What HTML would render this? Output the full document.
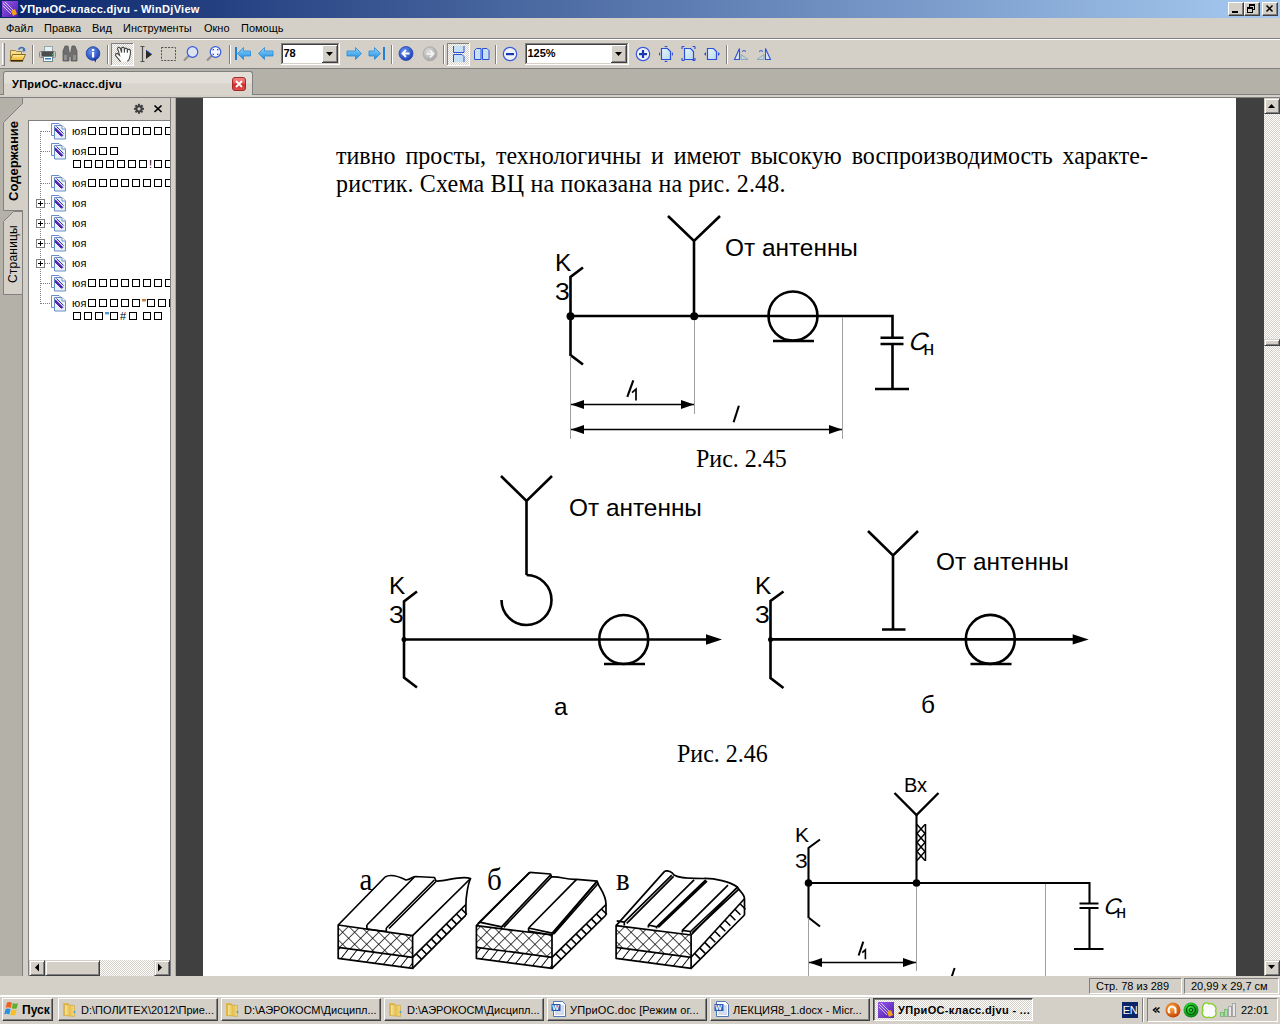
<!DOCTYPE html>
<html><head><meta charset="utf-8">
<style>
*{margin:0;padding:0;box-sizing:border-box}
html,body{width:1280px;height:1024px;overflow:hidden;background:#d4d0c8;font-family:"Liberation Sans",sans-serif;font-size:11px;color:#000}
.a{position:absolute}
#title{left:0;top:0;width:1280px;height:18px;background:linear-gradient(to right,#0a246a,#a6caf0)}
#title .t{left:20px;top:2px;color:#fff;font-weight:bold;font-size:11px;line-height:14px;white-space:nowrap;letter-spacing:0.31px}
.tbtn{top:2px;width:16px;height:14px;background:#d4d0c8;border-top:1px solid #fff;border-left:1px solid #fff;border-right:1px solid #404040;border-bottom:1px solid #404040;box-shadow:inset -1px -1px 0 #808080}
#menu{left:0;top:18px;width:1280px;height:20px;background:#d4d0c8}
#menu span{position:absolute;top:3px;line-height:14px;white-space:nowrap}
#ln1{left:0;top:38px;width:1280px;height:1px;background:#808080}
#ln2{left:0;top:39px;width:1280px;height:1px;background:#fff}
#tool{left:0;top:40px;width:1280px;height:28px;background:#d4d0c8}
#ln3{left:0;top:68px;width:1280px;height:1px;background:#808080}
#strip{left:0;top:69px;width:1280px;height:26px;background:#b4b1a9;border-bottom:1px solid #808080}
#tab{left:3px;top:71px;width:250px;height:24px;background:linear-gradient(#e2dfd8 0,#e2dfd8 45%,#d9d5cd 55%,#d9d5cd 100%);border:1px solid #808080;border-bottom:none;border-radius:3px 3px 0 0}
#ln4{left:0;top:97px;width:1280px;height:1px;background:#808080}
.sep{width:2px;border-left:1px solid #808080;border-right:1px solid #fff;top:45px;height:20px}
#main{left:0;top:98px;width:1280px;height:878px;background:#d4d0c8}
#dark1{left:176px;top:98px;width:27px;height:878px;background:#404040}
#page{left:203px;top:98px;width:1033px;height:878px;background:#fff;overflow:hidden}
#dark2{left:1236px;top:98px;width:28px;height:878px;background:#404040}
#vscroll{left:1264px;top:98px;width:16px;height:878px;background-color:#eeede9;background-image:repeating-conic-gradient(#d4d0c8 0 25%,#fff 0 50%);background-size:2px 2px}
.sbtn{width:16px;height:16px;background:#d4d0c8;border-top:1px solid #d4d0c8;border-left:1px solid #d4d0c8;border-right:1px solid #404040;border-bottom:1px solid #404040;box-shadow:inset 1px 1px 0 #fff,inset -1px -1px 0 #808080}
#status{left:0;top:976px;width:1280px;height:19px;background:#d4d0c8}
.spane{top:978px;height:16px;border-top:1px solid #808080;border-left:1px solid #808080;border-right:1px solid #fff;border-bottom:1px solid #fff;line-height:14px;text-align:left;padding-left:6px;white-space:nowrap}
#taskbar{left:0;top:995px;width:1280px;height:29px;background:#d4d0c8;border-top:1px solid #d4d0c8;box-shadow:inset 0 1px 0 #fff}
.task{top:998px;height:23px;background:#d4d0c8;border-top:1px solid #fff;border-left:1px solid #fff;border-right:1px solid #404040;border-bottom:1px solid #404040;box-shadow:inset -1px -1px 0 #808080;white-space:nowrap;overflow:hidden;line-height:20px}
.task span{position:absolute;left:22px;top:1px}
.box{display:inline-block;width:8px;height:8px;border:1px solid #000;margin-right:3px;vertical-align:0px}
</style></head><body>
<div id="title" class="a"><div class="a t">УПриОС-класс.djvu - WinDjView</div>
<div class="a tbtn" style="left:1228px"></div>
<div class="a tbtn" style="left:1244px"></div>
<div class="a tbtn" style="left:1262px"></div>
</div>
<div id="menu" class="a">
<span style="left:6px">Файл</span><span style="left:44px">Правка</span><span style="left:92px">Вид</span><span style="left:123px">Инструменты</span><span style="left:204px">Окно</span><span style="left:241px">Помощь</span>
</div>
<div id="ln1" class="a"></div><div id="ln2" class="a"></div>
<div id="tool" class="a"></div>
<div id="ln3" class="a"></div>
<div id="strip" class="a"></div>
<div id="tab" class="a"></div>
<div id="main" class="a"></div>
<div id="ln4" class="a"></div>
<div id="dark1" class="a"></div>
<div id="page" class="a"></div>
<div id="dark2" class="a"></div>
<div id="vscroll" class="a"></div>
<div id="status" class="a"></div>
<div id="taskbar" class="a"></div>
<svg class="a" style="left:0;top:40px" width="800" height="28" viewBox="0 40 800 28" shape-rendering="crispEdges">
<defs>
<pattern id="chk" width="2" height="2" patternUnits="userSpaceOnUse"><rect width="2" height="2" fill="#d4d0c8"/><rect width="1" height="1" fill="#fff"/><rect x="1" y="1" width="1" height="1" fill="#fff"/></pattern>
<linearGradient id="fold" x1="0" y1="0" x2="0" y2="1"><stop offset="0" stop-color="#fff0a0"/><stop offset="1" stop-color="#e8a818"/></linearGradient>
<linearGradient id="blu" x1="0" y1="0" x2="0" y2="1"><stop offset="0" stop-color="#90d8ff"/><stop offset="1" stop-color="#1e88d8"/></linearGradient>
<radialGradient id="bc" cx="0.4" cy="0.35" r="0.7"><stop offset="0" stop-color="#6a98f0"/><stop offset="1" stop-color="#1c3cb0"/></radialGradient>
<radialGradient id="gc" cx="0.4" cy="0.35" r="0.7"><stop offset="0" stop-color="#e0e0e0"/><stop offset="1" stop-color="#a0a0a0"/></radialGradient>
<linearGradient id="pg" x1="0" y1="0" x2="1" y2="1"><stop offset="0" stop-color="#e8f4fc"/><stop offset="1" stop-color="#b8d8ec"/></linearGradient>
</defs>
<!-- grip -->
<rect x="2" y="43" width="1" height="22" fill="#fff"/><rect x="4" y="43" width="1" height="23" fill="#808080"/><rect x="2" y="65" width="3" height="1" fill="#808080"/>
<!-- separators -->
<g fill="#808080"><rect x="32" y="45" width="1" height="19"/><rect x="107" y="45" width="1" height="19"/><rect x="229" y="45" width="1" height="19"/><rect x="391" y="45" width="1" height="19"/><rect x="443" y="45" width="1" height="19"/><rect x="495" y="45" width="1" height="19"/><rect x="726" y="45" width="1" height="19"/></g>
<g fill="#fff"><rect x="33" y="45" width="1" height="19"/><rect x="108" y="45" width="1" height="19"/><rect x="230" y="45" width="1" height="19"/><rect x="392" y="45" width="1" height="19"/><rect x="444" y="45" width="1" height="19"/><rect x="496" y="45" width="1" height="19"/><rect x="727" y="45" width="1" height="19"/></g>
<g shape-rendering="auto">
<!-- folder -->
<path d="M10.5 50.5h5l1 1h5v9h-11z" fill="#f4dc88" stroke="#9c8448"/>
<path d="M12.5 54.5h13l-3 6.5h-12.5z" fill="url(#fold)" stroke="#8a6a20"/>
<rect x="11" y="60" width="12" height="1.5" fill="#3a2a08"/>
<path d="M18.5 49.5q3-4 6.5 0" fill="none" stroke="#3c6cb8" stroke-width="1.6"/><path d="M23 48.5l3 2.5l-3.5 0.8z" fill="#3c6cb8"/>
<!-- printer -->
<rect x="44.5" y="46.5" width="8" height="6" fill="#e4f0f4" stroke="#98a8a8"/>
<rect x="39.5" y="51.5" width="16" height="6" rx="1" fill="#c8c8c8" stroke="#888"/>
<rect x="41.5" y="51.5" width="12" height="5" fill="#4c4c4c"/>
<rect x="43.5" y="56.5" width="9" height="5" fill="#fff" stroke="#6a8a8a"/>
<rect x="45" y="58" width="6" height="1.5" fill="#2a7ad0"/>
<rect x="52" y="54" width="1" height="1" fill="#30e030"/>
<!-- binoculars -->
<path d="M63 51l2-5h3l1 5v10h-6z M71 51l1-5h3l2 5v10h-6z" fill="#6e6e6e" stroke="#5a5a5a" stroke-width="0.8"/>
<rect x="68" y="52" width="4" height="5" fill="#707070"/>
<rect x="64" y="55" width="3" height="5" fill="#909090"/><rect x="73" y="55" width="3" height="5" fill="#909090"/>
<!-- info -->
<circle cx="93" cy="53.5" r="6.8" fill="url(#bc)" stroke="#1a3aa0" stroke-width="0.8"/>
<path d="M93 59l3 3.5l0-4z" fill="#1a3aa0"/>
<rect x="92" y="49" width="2.2" height="2" fill="#fff"/><rect x="92" y="52" width="2.2" height="5.5" fill="#fff"/>
</g>
<!-- hand pressed button -->
<rect x="111" y="43" width="23" height="23" fill="url(#chk)"/>
<rect x="111" y="43" width="22" height="1" fill="#808080"/><rect x="111" y="43" width="1" height="22" fill="#808080"/>
<rect x="111" y="65" width="23" height="1" fill="#fff"/><rect x="133" y="43" width="1" height="23" fill="#fff"/>
<g shape-rendering="auto">
<path d="M120.6 61.6L115.6 55.6L115.6 54L117.2 53.4L119.6 55.4L118.4 51L117.4 48.4L118.6 47.2L120.4 48.4L121.6 52.6L121.6 47.8L123 47.2L124.2 47.8L124.4 52.6L124.6 48.6L126 48.2L127.2 48.8L127.4 52.6L127.6 49.6L129 49.2L130.4 50.2L130.4 54L129.6 57.6L129 59.6L127.4 61.4Z" fill="#fff"/>
<path d="M120.6 61.6L115.6 55.6L115.6 54L117.2 53.4L119.6 55.4L118.4 51L117.4 48.4L118.6 47.2L120.4 48.4L121.6 52.6L121.6 47.8L123 47.2L124.2 47.8L124.4 52.6L124.6 48.6L126 48.2L127.2 48.8L127.4 52.6L127.6 49.6L129 49.2L130.4 50.2L130.4 54L129.6 57.6L129 59.6L127.4 61.4" fill="none" stroke="#484848" stroke-width="1.1"/>
<!-- text select -->
<path d="M140.5 46.5h4M140.5 61.5h4M142.5 46.5v15" stroke="#505050" stroke-width="1.2" fill="none"/>
<path d="M146 50l6 4.5l-6 4.5z" fill="#282828"/><path d="M146 50l6 4.5" stroke="#3050e0" stroke-width="0.9"/>
<!-- rect select -->
<rect x="161.5" y="47.5" width="14" height="13" fill="none" stroke="#505050" stroke-dasharray="2 1.3"/>
<!-- zoom -->
<line x1="184" y1="60.5" x2="189" y2="55.5" stroke="#909090" stroke-width="2.2"/>
<circle cx="192.5" cy="52" r="5.3" fill="#dce4f0" stroke="#3a5adc" stroke-width="1.2"/>
<!-- zoom rect -->
<line x1="207" y1="60.5" x2="212" y2="55.5" stroke="#909090" stroke-width="2.2"/>
<circle cx="215.5" cy="52" r="5.3" fill="#f4f6fc" stroke="#3a5adc" stroke-width="1.2"/>
<path d="M213 50.5v-1h1M218 50.5v-1h-1M213 53.5v1h1M218 53.5v1h-1" stroke="#2a40d0" stroke-width="1" fill="none"/>
<!-- first -->
<path d="M236 47v13" stroke="#2080d8" stroke-width="2"/>
<path d="M237.5 53.5l6-6v3.5h7v5h-7v3.5z" fill="url(#blu)" stroke="#2a8ad8" stroke-width="0.8"/>
<!-- prev -->
<path d="M258.5 53.5l6-6v3.5h8.5v5h-8.5v3.5z" fill="url(#blu)" stroke="#2a8ad8" stroke-width="0.8"/>
</g>
<!-- page combo -->
<rect x="281" y="43" width="59" height="22" fill="#fff"/>
<rect x="281" y="43" width="58" height="1" fill="#808080"/><rect x="281" y="43" width="1" height="21" fill="#808080"/>
<rect x="282" y="44" width="56" height="1" fill="#404040"/><rect x="282" y="44" width="1" height="19" fill="#404040"/>
<rect x="281" y="64" width="59" height="1" fill="#fff"/><rect x="339" y="43" width="1" height="22" fill="#fff"/>
<rect x="282" y="63" width="57" height="1" fill="#d4d0c8"/><rect x="338" y="44" width="1" height="20" fill="#d4d0c8"/>
<rect x="322" y="45" width="16" height="18" fill="#d4d0c8"/>
<rect x="322" y="45" width="15" height="1" fill="#fff"/><rect x="322" y="45" width="1" height="17" fill="#fff"/>
<rect x="322" y="62" width="16" height="1" fill="#404040"/><rect x="337" y="45" width="1" height="18" fill="#404040"/>
<rect x="323" y="61" width="14" height="1" fill="#808080"/><rect x="336" y="46" width="1" height="16" fill="#808080"/>
<path d="M326 52h7l-3.5 4z" fill="#000" shape-rendering="auto"/>
<text x="283.5" y="57" font-family="Liberation Sans" font-weight="bold" font-size="11" shape-rendering="auto">78</text>
<g shape-rendering="auto">
<!-- next -->
<path d="M361.5 53.5l-6-6v3.5h-8.5v5h8.5v3.5z" fill="url(#blu)" stroke="#2a8ad8" stroke-width="0.8"/>
<!-- last -->
<path d="M380.5 53.5l-6-6v3.5h-5.5v5h5.5v3.5z" fill="url(#blu)" stroke="#2a8ad8" stroke-width="0.8"/>
<path d="M384 47v13" stroke="#2080d8" stroke-width="2"/>
<!-- back -->
<circle cx="406" cy="53.5" r="7" fill="url(#bc)" stroke="#2844b8" stroke-width="0.8"/>
<path d="M409.5 53.5h-6M406 50l-3.5 3.5l3.5 3.5" stroke="#fff" stroke-width="1.8" fill="none"/>
<!-- fwd -->
<circle cx="430" cy="53.8" r="7" fill="url(#gc)" stroke="#a8a8a8" stroke-width="0.8"/>
<path d="M426.5 53.8h6M430 50.3l3.5 3.5l-3.5 3.5" stroke="#f4f4f4" stroke-width="1.8" fill="none"/>
</g>
<!-- continuous pressed -->
<rect x="447" y="43" width="23" height="23" fill="url(#chk)"/>
<rect x="447" y="43" width="22" height="1" fill="#808080"/><rect x="447" y="43" width="1" height="22" fill="#808080"/>
<rect x="447" y="65" width="23" height="1" fill="#fff"/><rect x="469" y="43" width="1" height="23" fill="#fff"/>
<g shape-rendering="auto">
<path d="M453.5 46v6.5h10.5v-6.5" fill="#c8e0f4" stroke="#2a50d8" stroke-width="1"/>
<path d="M453.5 62v-7.5h8.5l2 2v5.5" fill="#c8e0f4" stroke="#2a50d8" stroke-width="1"/>
<!-- facing -->
<path d="M474.5 59.5v-9l2-2h4.5v11z" fill="#c8e0f4" stroke="#2a50d8" stroke-width="1"/>
<path d="M482.5 59.5v-11h4.5l2 2v9z" fill="#c8e0f4" stroke="#2a50d8" stroke-width="1"/>
<!-- zoom out -->
<circle cx="510" cy="54" r="6.7" fill="#f0f2fa" stroke="#3a5adc" stroke-width="1.2"/>
<rect x="506" y="53" width="8" height="2.2" fill="#1838b0"/>
</g>
<!-- zoom combo -->
<rect x="525" y="43" width="104" height="22" fill="#fff"/>
<rect x="525" y="43" width="103" height="1" fill="#808080"/><rect x="525" y="43" width="1" height="21" fill="#808080"/>
<rect x="526" y="44" width="101" height="1" fill="#404040"/><rect x="526" y="44" width="1" height="19" fill="#404040"/>
<rect x="525" y="64" width="104" height="1" fill="#fff"/><rect x="628" y="43" width="1" height="22" fill="#fff"/>
<rect x="526" y="63" width="102" height="1" fill="#d4d0c8"/><rect x="627" y="44" width="1" height="20" fill="#d4d0c8"/>
<rect x="611" y="45" width="16" height="18" fill="#d4d0c8"/>
<rect x="611" y="45" width="15" height="1" fill="#fff"/><rect x="611" y="45" width="1" height="17" fill="#fff"/>
<rect x="611" y="62" width="16" height="1" fill="#404040"/><rect x="626" y="45" width="1" height="18" fill="#404040"/>
<rect x="612" y="61" width="14" height="1" fill="#808080"/><rect x="625" y="46" width="1" height="16" fill="#808080"/>
<path d="M615 52h7l-3.5 4z" fill="#000" shape-rendering="auto"/>
<text x="527.5" y="57" font-family="Liberation Sans" font-weight="bold" font-size="11" shape-rendering="auto">125%</text>
<g shape-rendering="auto">
<!-- zoom in -->
<circle cx="643" cy="54" r="6.7" fill="#f0f2fa" stroke="#3a5adc" stroke-width="1.2"/>
<rect x="639" y="53" width="8" height="2.2" fill="#1838b0"/><rect x="641.9" y="50" width="2.2" height="8" fill="#1838b0"/>
<!-- fit page -->
<path d="M661.5 59.5v-11h6l3 3v8z" fill="url(#pg)" stroke="#2a50d8" stroke-width="1.2"/>
<path d="M664 46h4l-2 1.5z M664 62h4l-2-1.5z M659 52v4l1.5-2z M673 52v4l-1.5-2z" fill="#2a50d8"/>
<!-- fit width -->
<path d="M684.5 59.5v-11h6l3 3v8z" fill="url(#pg)" stroke="#2a50d8" stroke-width="1.2"/>
<path d="M682 46.5h2.5M682 46.5v2.5M695 46.5h-2.5M695 46.5v2.5M682 60.5h2.5M682 60.5v-2.5M695 60.5h-2.5M695 60.5v-2.5" stroke="#2a50d8" stroke-width="1.2"/>
<!-- actual -->
<path d="M707.5 59.5v-11h6l3 3v8z" fill="url(#pg)" stroke="#2a50d8" stroke-width="1.2"/>
<path d="M706 52v4l-2-2z M718 52v4l2-2z" fill="#2a50d8"/>
<!-- rotate -->
<path d="M734.5 59.5l5-11v11z" fill="#dce8f4" stroke="#3050d8" stroke-width="1.1"/>
<path d="M741 59.5v-5l7 5z" fill="#c0d4e4" stroke="#90a8b8" stroke-width="1"/>
<path d="M742 51.5q2-2 4 0" stroke="#3050d8" fill="none"/>
<path d="M770.5 59.5l-5-11v11z" fill="#dce8f4" stroke="#3050d8" stroke-width="1.1"/>
<path d="M764 59.5v-5l-7 5z" fill="#c0d4e4" stroke="#90a8b8" stroke-width="1"/>
<path d="M759 51.5q2-2 4 0" stroke="#3050d8" fill="none"/>
</g>
</svg>
<div class="a" style="left:12px;top:78px;font-weight:bold;line-height:13px;white-space:nowrap;letter-spacing:0.3px">УПриОС-класс.djvu</div>
<svg class="a" style="left:232px;top:77px" width="14" height="14" viewBox="0 0 14 14">
<defs><linearGradient id="rg" x1="0" y1="0" x2="0" y2="1"><stop offset="0" stop-color="#f08a8a"/><stop offset="0.45" stop-color="#e25a5a"/><stop offset="0.5" stop-color="#cc2a2a"/><stop offset="1" stop-color="#e05050"/></linearGradient></defs>
<rect x="0.5" y="0.5" width="13" height="13" rx="2.5" fill="url(#rg)" stroke="#a82828"/>
<path d="M4 4l6 6M10 4l-6 6" stroke="#fff" stroke-width="1.8"/>
</svg>
<!-- left vertical tab strip -->
<div class="a" style="left:0;top:98px;width:22px;height:878px;background:#b4b1a9"></div>
<div class="a" style="left:22px;top:98px;width:1px;height:878px;background:#808080"></div>
<svg class="a" style="left:0;top:98px" width="24" height="200" viewBox="0 98 24 200">
<path d="M3.5 122.5L22.5 103.5V210.5H3.5Z" fill="#d4d0c8" stroke="#808080"/>
<rect x="22" y="104" width="2" height="106" fill="#d4d0c8"/>
<path d="M3.5 221.5L13.5 211.5H22.5V294.5H3.5Z" fill="#d4d0c8" stroke="#808080"/>
</svg>
<div class="a" style="left:6px;top:201px;width:90px;height:15px;transform-origin:0 0;transform:rotate(-90deg);font-weight:bold;font-size:13px;line-height:15px;white-space:nowrap">Содержание</div>
<div class="a" style="left:6px;top:283px;width:80px;height:14px;transform-origin:0 0;transform:rotate(-90deg);font-size:12px;line-height:14px;white-space:nowrap;letter-spacing:0.2px">Страницы</div>
<!-- panel right border & splitter -->
<div class="a" style="left:170px;top:98px;width:1px;height:878px;background:#808080"></div>
<div class="a" style="left:175px;top:98px;width:1px;height:878px;background:#a8a8a8"></div>
<!-- header icons -->
<svg class="a" style="left:132px;top:102px" width="34" height="14" viewBox="132 102 34 14">
<g fill="#404040" shape-rendering="auto">
<circle cx="139" cy="108.8" r="3.6"/>
<rect x="138" y="103.8" width="2" height="10" /><rect x="134" y="107.8" width="10" height="2"/>
<rect x="138" y="103.8" width="2" height="10" transform="rotate(45 139 108.8)"/><rect x="134" y="107.8" width="10" height="2" transform="rotate(45 139 108.8)"/>
</g>
<circle cx="139" cy="108.8" r="1.6" fill="#d0d0d0"/>
<path d="M154.5 105.5l7 6.5M161.5 105.5l-7 6.5" stroke="#000" stroke-width="1.7"/>
</svg>
<!-- tree box -->
<div class="a" style="left:28px;top:120px;width:142px;height:856px;background:#fff;border-top:1px solid #808080;border-left:1px solid #808080"></div>
<svg class="a" style="left:29px;top:121px" width="141" height="220" viewBox="29 121 141 220">
<defs>
<g id="pic">
<path d="M0.5 0.5h7.5l1.5 1.5v10.5h-9z" fill="#f4f8fc" stroke="#6a8ec4"/>
<path d="M3.5 2.5h7.5l3.5 3.5v10h-11z" fill="#e8f0fa" stroke="#6a8ec4"/>
<path d="M4 4.5l8 8M4 7l6.5 6.5M5.5 3.5l7 7" stroke="#3030c8" stroke-width="1"/>
<path d="M4 5.5l7.5 7.5" stroke="#500090" stroke-width="1.3"/>
<path d="M11 2.5v3.5h3.5" fill="#fff" stroke="#6a8ec4"/>
</g>
<g id="plus"><rect x="0.5" y="0.5" width="8" height="8" fill="#fff" stroke="#808080"/><rect x="2" y="4" width="5" height="1" fill="#000"/><rect x="4" y="2" width="1" height="5" fill="#000"/></g>
</defs>
<g stroke="#808080" stroke-dasharray="1 1" stroke-width="1">
<path d="M40.5 131v173"/>
<path d="M41 131.5h10M41 151.5h10M41 183.5h10M45 203.5h6M45 223.5h6M45 243.5h6M45 263.5h6M41 283.5h10M41 303.5h10"/>
</g>
<rect x="40" y="304" width="1" height="40" fill="#fff"/>
<use href="#pic" x="51" y="123"/><use href="#pic" x="51" y="143"/><use href="#pic" x="51" y="175"/><use href="#pic" x="51" y="195"/><use href="#pic" x="51" y="215"/><use href="#pic" x="51" y="235"/><use href="#pic" x="51" y="255"/><use href="#pic" x="51" y="275"/><use href="#pic" x="51" y="295"/>
<use href="#plus" x="36" y="199"/><use href="#plus" x="36" y="219"/><use href="#plus" x="36" y="239"/><use href="#plus" x="36" y="259"/>
</svg>
<div class="a" style="left:29px;top:121px;width:141px;height:220px;overflow:hidden">
<div class="a" style="left:43px;top:4px;line-height:13px;letter-spacing:0.3px">юя</div>
<div class="a" style="left:59px;top:6px;width:8px;height:8px;border:1px solid #000"></div>
<div class="a" style="left:70px;top:6px;width:8px;height:8px;border:1px solid #000"></div>
<div class="a" style="left:81px;top:6px;width:8px;height:8px;border:1px solid #000"></div>
<div class="a" style="left:92px;top:6px;width:8px;height:8px;border:1px solid #000"></div>
<div class="a" style="left:103px;top:6px;width:8px;height:8px;border:1px solid #000"></div>
<div class="a" style="left:114px;top:6px;width:8px;height:8px;border:1px solid #000"></div>
<div class="a" style="left:125px;top:6px;width:8px;height:8px;border:1px solid #000"></div>
<div class="a" style="left:136px;top:6px;width:8px;height:8px;border:1px solid #000"></div>
<div class="a" style="left:43px;top:24px;line-height:13px;letter-spacing:0.3px">юя</div>
<div class="a" style="left:59px;top:26px;width:8px;height:8px;border:1px solid #000"></div>
<div class="a" style="left:70px;top:26px;width:8px;height:8px;border:1px solid #000"></div>
<div class="a" style="left:81px;top:26px;width:8px;height:8px;border:1px solid #000"></div>
<div class="a" style="left:44px;top:39px;width:8px;height:8px;border:1px solid #000"></div>
<div class="a" style="left:55px;top:39px;width:8px;height:8px;border:1px solid #000"></div>
<div class="a" style="left:66px;top:39px;width:8px;height:8px;border:1px solid #000"></div>
<div class="a" style="left:77px;top:39px;width:8px;height:8px;border:1px solid #000"></div>
<div class="a" style="left:88px;top:39px;width:8px;height:8px;border:1px solid #000"></div>
<div class="a" style="left:99px;top:39px;width:8px;height:8px;border:1px solid #000"></div>
<div class="a" style="left:110px;top:39px;width:8px;height:8px;border:1px solid #000"></div>
<div class="a" style="left:120px;top:37px;line-height:13px">!</div>
<div class="a" style="left:125px;top:39px;width:8px;height:8px;border:1px solid #000"></div>
<div class="a" style="left:136px;top:39px;width:8px;height:8px;border:1px solid #000"></div>
<div class="a" style="left:43px;top:56px;line-height:13px;letter-spacing:0.3px">юя</div>
<div class="a" style="left:59px;top:58px;width:8px;height:8px;border:1px solid #000"></div>
<div class="a" style="left:70px;top:58px;width:8px;height:8px;border:1px solid #000"></div>
<div class="a" style="left:81px;top:58px;width:8px;height:8px;border:1px solid #000"></div>
<div class="a" style="left:92px;top:58px;width:8px;height:8px;border:1px solid #000"></div>
<div class="a" style="left:103px;top:58px;width:8px;height:8px;border:1px solid #000"></div>
<div class="a" style="left:114px;top:58px;width:8px;height:8px;border:1px solid #000"></div>
<div class="a" style="left:125px;top:58px;width:8px;height:8px;border:1px solid #000"></div>
<div class="a" style="left:136px;top:58px;width:8px;height:8px;border:1px solid #000"></div>
<div class="a" style="left:43px;top:76px;line-height:13px;letter-spacing:0.3px">юя</div>
<div class="a" style="left:43px;top:96px;line-height:13px;letter-spacing:0.3px">юя</div>
<div class="a" style="left:43px;top:116px;line-height:13px;letter-spacing:0.3px">юя</div>
<div class="a" style="left:43px;top:136px;line-height:13px;letter-spacing:0.3px">юя</div>
<div class="a" style="left:43px;top:156px;line-height:13px;letter-spacing:0.3px">юя</div>
<div class="a" style="left:59px;top:158px;width:8px;height:8px;border:1px solid #000"></div>
<div class="a" style="left:70px;top:158px;width:8px;height:8px;border:1px solid #000"></div>
<div class="a" style="left:81px;top:158px;width:8px;height:8px;border:1px solid #000"></div>
<div class="a" style="left:92px;top:158px;width:8px;height:8px;border:1px solid #000"></div>
<div class="a" style="left:103px;top:158px;width:8px;height:8px;border:1px solid #000"></div>
<div class="a" style="left:114px;top:158px;width:8px;height:8px;border:1px solid #000"></div>
<div class="a" style="left:125px;top:158px;width:8px;height:8px;border:1px solid #000"></div>
<div class="a" style="left:136px;top:158px;width:8px;height:8px;border:1px solid #000"></div>
<div class="a" style="left:43px;top:176px;line-height:13px;letter-spacing:0.3px">юя</div>
<div class="a" style="left:59px;top:178px;width:8px;height:8px;border:1px solid #000"></div>
<div class="a" style="left:70px;top:178px;width:8px;height:8px;border:1px solid #000"></div>
<div class="a" style="left:81px;top:178px;width:8px;height:8px;border:1px solid #000"></div>
<div class="a" style="left:92px;top:178px;width:8px;height:8px;border:1px solid #000"></div>
<div class="a" style="left:103px;top:178px;width:8px;height:8px;border:1px solid #000"></div>
<div class="a" style="left:113px;top:176px;line-height:13px">"</div>
<div class="a" style="left:118px;top:178px;width:8px;height:8px;border:1px solid #000"></div>
<div class="a" style="left:129px;top:178px;width:8px;height:8px;border:1px solid #000"></div>
<div class="a" style="left:140px;top:178px;width:8px;height:8px;border:1px solid #000"></div>
<div class="a" style="left:44px;top:191px;width:8px;height:8px;border:1px solid #000"></div>
<div class="a" style="left:55px;top:191px;width:8px;height:8px;border:1px solid #000"></div>
<div class="a" style="left:66px;top:191px;width:8px;height:8px;border:1px solid #000"></div>
<div class="a" style="left:76px;top:189px;line-height:13px">"</div>
<div class="a" style="left:81px;top:191px;width:8px;height:8px;border:1px solid #000"></div>
<div class="a" style="left:91px;top:189px;line-height:13px">#</div>
<div class="a" style="left:100px;top:191px;width:8px;height:8px;border:1px solid #000"></div>
<div class="a" style="left:114px;top:191px;width:8px;height:8px;border:1px solid #000"></div>
<div class="a" style="left:125px;top:191px;width:8px;height:8px;border:1px solid #000"></div>
</div>
<!-- h scrollbar -->
<div class="a" style="left:29px;top:960px;width:141px;height:16px;background-color:#eeede9;background-image:repeating-conic-gradient(#d4d0c8 0 25%,#fff 0 50%);background-size:2px 2px"></div>
<div class="a sbtn" style="left:29px;top:960px"></div>
<div class="a sbtn" style="left:45px;top:960px;width:55px"></div>
<div class="a sbtn" style="left:154px;top:960px"></div>
<svg class="a" style="left:29px;top:960px" width="141" height="16" viewBox="29 960 141 16"><path d="M35 967.5l4-4v8z M162 967.5l-4-4v8z" fill="#000"/></svg>
<svg class="a" style="left:203px;top:98px" width="1033" height="878" viewBox="203 98 1033 878">
<defs>
<marker id="ah" viewBox="0 0 13 9" refX="13" refY="4.5" markerWidth="13" markerHeight="9" markerUnits="userSpaceOnUse" orient="auto-start-reverse"><path d="M0 0L13 4.5L0 9z" fill="#000"/></marker>
<marker id="ah2" viewBox="0 0 16 10" refX="16" refY="5" markerWidth="16" markerHeight="10" markerUnits="userSpaceOnUse" orient="auto"><path d="M0 0L16 5L0 10z" fill="#000"/></marker>
<pattern id="xh" width="8.5" height="8.5" patternUnits="userSpaceOnUse" patternTransform="rotate(45)"><path d="M0 0V8.5M0 0H8.5" stroke="#000" stroke-width="1.4" fill="none"/></pattern>
<pattern id="sh" width="7.4" height="8" patternUnits="userSpaceOnUse" patternTransform="rotate(38)"><path d="M0 0V8" stroke="#000" stroke-width="1.8"/></pattern>
</defs>
<g stroke="#000" stroke-width="2.6" fill="none" stroke-linecap="butt" stroke-linejoin="miter">
<path d="M668 216L694 241L720 216M694 241V316"/>
<path d="M570.5 316H892.5V337.8M880.5 337.8H903.5M880.5 344H903.5M892.5 344V389M875 389H909"/>
<path d="M583 267.5L570.5 277V355L583 364.5"/>
<circle cx="793" cy="316" r="24.5"/>
<path d="M773 341H814"/>
</g>
<circle cx="570.5" cy="316.2" r="4"/><circle cx="694.2" cy="316.2" r="4"/>
<path d="M570.5 356V439M694.5 320V414M842.5 317.5V439" stroke="#a0a0a0" stroke-width="1" fill="none"/>
<path d="M571 404.5H694" stroke="#000" stroke-width="1.6" marker-start="url(#ah)" marker-end="url(#ah)"/>
<path d="M571 429.5H842" stroke="#000" stroke-width="1.6" marker-start="url(#ah)" marker-end="url(#ah)"/>
<text x="555" y="271" font-family="Liberation Sans" font-size="24.4">K</text>
<text x="555" y="300" font-family="Liberation Sans" font-size="24.4">З</text>
<text x="725" y="256" font-family="Liberation Sans" font-size="24.4">От антенны</text>
<path d="M627.3 396.8L633.3 380.3" stroke="#000" stroke-width="2.1"/><path d="M636 400.6V389.2L632 392.6" stroke="#000" stroke-width="1.7" fill="none" stroke-linejoin="miter"/>
<path d="M733.6 422.2L738.9 405.8" stroke="#000" stroke-width="2.1"/>
<text transform="translate(908.5 350.4) skewX(-10)" font-family="Liberation Sans" font-size="25" font-style="italic">C</text><text x="923.3" y="354.8" font-family="Liberation Sans" font-size="20">н</text>
<text transform="translate(696 467) scale(1 1.09)" font-family="Liberation Serif" font-size="24">Рис. 2.45</text>
<g stroke="#000" stroke-width="2.6" fill="none" stroke-linecap="butt" stroke-linejoin="miter">
<path d="M501 476L526.5 501L552 476M526.5 501V575"/>
<path d="M526.5 575A25 25 0 1 1 501.5 600"/>
<path d="M417 591.5L404 601.5V677.5L417 687.5"/>
<circle cx="623.7" cy="639.5" r="24.5"/>
<path d="M604 664H645"/>
</g>
<path d="M404 639.5H708" stroke="#000" stroke-width="2.6"/><path d="M706 634.3L722 639.5L706 644.7Z"/>
<circle cx="404" cy="639.5" r="2.5"/>
<text x="389" y="594" font-family="Liberation Sans" font-size="24.4">K</text><text x="389" y="623" font-family="Liberation Sans" font-size="24.4">З</text>
<text x="569" y="516" font-family="Liberation Sans" font-size="24.4">От антенны</text>
<text x="554" y="715" font-family="Liberation Sans" font-size="24.4">а</text>
<text transform="translate(677 762) scale(1 1.09)" font-family="Liberation Serif" font-size="24">Рис. 2.46</text>
<g stroke="#000" stroke-width="2.6" fill="none" stroke-linecap="butt" stroke-linejoin="miter">
<path d="M868 531L893 555.5L918 531M893 555.5V629.5M882 629.5H905.5"/>
<path d="M783.5 591.5L770.5 601V678L783.5 688"/>
<circle cx="990.3" cy="639.4" r="24.5"/>
<path d="M970.5 664H1011.5"/>
</g>
<path d="M770.5 639.4H1075" stroke="#000" stroke-width="2.6"/><path d="M1072.7 634.2L1088.7 639.4L1072.7 644.6Z"/>
<circle cx="770.5" cy="639.4" r="2.5"/>
<text x="755" y="594" font-family="Liberation Sans" font-size="24.4">K</text><text x="755" y="623" font-family="Liberation Sans" font-size="24.4">З</text>
<text x="936" y="570" font-family="Liberation Sans" font-size="24.4">От антенны</text>
<text x="921" y="713" font-family="Liberation Sans" font-size="24.4">б</text>
<g stroke="#000" stroke-width="2.1" fill="none">
<path d="M894.5 793L916.5 815L938.5 793" stroke-width="2.4"/><path d="M916.5 815V883"/>
<path d="M808.5 883H1089.5V903.5M1079.5 903.5H1098.5M1079.5 908H1098.5M1089.5 908V949M1074 949H1103.5"/>
<path d="M820 839.5L808.5 848V917.5L820 926.5"/>
</g>
<g stroke="#000" stroke-width="1.5" fill="none"><path d="M917 824.5 L925 833.5 L917 842.5 L925 851.5 L917 860.5"/><path d="M925 824.5 L917 833.5 L925 842.5 L917 851.5 L925 860.5"/><path d="M925.5 824V861"/></g>
<circle cx="808.5" cy="883" r="3.8"/><circle cx="916.5" cy="883" r="3.8"/>
<path d="M808.5 918V976M916.5 887V971M1045.5 884V976" stroke="#a0a0a0" stroke-width="1" fill="none"/>
<path d="M809 962.5H916" stroke="#000" stroke-width="1.6" marker-start="url(#ah)" marker-end="url(#ah)"/>
<text x="904" y="792" font-family="Liberation Sans" font-size="20">Вх</text>
<text x="795" y="842" font-family="Liberation Sans" font-size="21">K</text><text x="795" y="868" font-family="Liberation Sans" font-size="21">З</text>
<path d="M858.6 955.5L863.3 941.6" stroke="#000" stroke-width="2"/><path d="M865.4 959.3V949.8L862.2 952.6" stroke="#000" stroke-width="1.6" fill="none"/>
<path d="M950 982L954.6 968" stroke="#000" stroke-width="2"/>
<text transform="translate(1103.5 913.6) skewX(-10)" font-family="Liberation Sans" font-size="22.5" font-style="italic">C</text><text x="1116.3" y="917.7" font-family="Liberation Sans" font-size="18">н</text>
<path d="M338.2 925 L412.6 935.6 L412.6 957.3 L338.2 947.3 Z" fill="url(#xh)"/>
<path d="M338.2 947.3 L412.6 957.3 L412.6 968.4 L338.2 958.4 Z" fill="url(#sh)"/>
<path d="M416.1 953.8l5.5 5.5M421.2 948.8l5.5 5.5M426.2 943.8l5.5 5.5M431.2 938.9l5.5 5.5M436.2 933.9l5.5 5.5M441.3 928.9l5.5 5.5M446.3 923.9l5.5 5.5M451.3 918.9l5.5 5.5M456.4 914.0l5.5 5.5M461.4 909.0l5.5 5.5" stroke="#000" stroke-width="1.6"/>
<g stroke="#000" stroke-width="1.7" fill="none" stroke-linejoin="round">
<path d="M338.2 925 L412.6 935.6 L412.6 968.4 L338.2 958.4 Z"/>
<path d="M338.2 947.3 L412.6 957.3"/>
<path d="M338.2 925 L385.1 877 M412.6 935.6 L470.6 878.5 M412.6 968.4 L465.9 915.1"/>
<path d="M412.6 957.3 L465.9 904.5"/>
<path d="M385.1 877C390 874 398 876 406 880C410 880 412 877 415 876.5L434.5 877.5L436 881C445 882 460 875 470.6 878.5C468 884 466 896 465.9 904.5V915.1"/>
<path d="M366.9 925V929L386.3 931.5V928M366.9 925L414.4 877M386.3 928L434.3 880M389 928.5L436 881.5"/>
</g>
<path d="M476.4 925.6 L552 935 L552 957.3 L476.4 947.3 Z" fill="url(#xh)"/>
<path d="M476.4 947.3 L552 957.3 L552 968.4 L476.4 958.4 Z" fill="url(#sh)"/>
<path d="M555.6 953.8l5.5 5.5M560.7 948.8l5.5 5.5M565.8 943.8l5.5 5.5M570.9 938.8l5.5 5.5M576.0 933.9l5.5 5.5M581.1 928.9l5.5 5.5M586.2 923.9l5.5 5.5M591.3 918.9l5.5 5.5M596.3 913.9l5.5 5.5M601.4 909.0l5.5 5.5" stroke="#000" stroke-width="1.6"/>
<g stroke="#000" stroke-width="1.7" fill="none" stroke-linejoin="round">
<path d="M476.4 925.6 L552 935 L552 968.4 L476.4 958.4 Z"/>
<path d="M476.4 947.3 L552 957.3"/>
<path d="M476.4 925.6 L529.8 872.3 M552 935 L597.2 881.1 M552 968.4 L606 915"/>
<path d="M552 957.3 L606 904.5"/>
<path d="M529.8 872.3L550.5 874L551.5 877C560 876 566 880 576.6 879.3L597.2 881.1C598 887 606 893 606 904.5V915"/>
<path d="M479.4 922.1L529.8 872.3M478 923.5L528.5 873.5M479.4 922.1L501.6 926.8V928.6M501.6 926.8L550.9 874.6M503.8 927.3L552.4 876"/>
<path d="M528.6 928V931L552 935M528.6 928L576.6 879.3M528.6 928L552 933.2L597.2 881.1M553.8 934L598.6 883"/>
</g>
<path d="M616.1 925.6 L691.1 935 L691.1 957.3 L616.1 947.3 Z" fill="url(#xh)"/>
<path d="M616.1 947.3 L691.1 957.3 L691.1 968.4 L616.1 958.4 Z" fill="url(#sh)"/>
<path d="M694.6 953.4l5.5 5.5M699.7 947.9l5.5 5.5M704.7 942.4l5.5 5.5M709.8 936.8l5.5 5.5M714.8 931.3l5.5 5.5M719.8 925.8l5.5 5.5M724.9 920.2l5.5 5.5M729.9 914.7l5.5 5.5M734.9 909.2l5.5 5.5M740.0 903.7l5.5 5.5" stroke="#000" stroke-width="1.6"/>
<g stroke="#000" stroke-width="1.7" fill="none" stroke-linejoin="round">
<path d="M616.1 925.6 L691.1 935 L691.1 968.4 L616.1 958.4 Z"/>
<path d="M616.1 947.3 L691.1 957.3"/>
<path d="M616.1 925.6 L664.8 871.1 M691.1 935 L737.4 887 M691.1 968.4 L744.5 915"/>
<path d="M691.1 957.3 L744.5 898.7"/>
<path d="M664.8 871.1C668 870 672 872 674 875C680 879 690 878 703 878.5C715 878 730 882 737.4 887C740 892 744.5 894 744.5 898.7V915"/>
<path d="M616.7 920.9L624.3 922.1V925.6M624.3 922.1L671.8 875.2M626.7 923.3L673.6 876.4"/>
<path d="M648.4 925V927.5M648.4 925L656.6 926.8V928.5M648.4 925L694.1 879.9M656.6 926.8L705.8 879.9M658.3 927.4L707 881.1"/>
<path d="M682.3 930.3V932.5M682.3 930.3L690.5 931.5V934M682.3 930.3L728 885.2M690.5 931.5L737.4 887.5M692.3 932.7L738.6 889.3"/>
</g>
<text transform="translate(359.5 890) scale(1 1.09)" font-family="Liberation Serif" font-size="29">а</text>
<text transform="translate(487 890) scale(1 1.09)" font-family="Liberation Serif" font-size="29">б</text>
<text transform="translate(616 890) scale(1 1.09)" font-family="Liberation Serif" font-size="29">в</text>
</svg>
<div class="a" style="left:336px;top:142px;width:812px;height:28px;font-family:'Liberation Serif',serif;font-size:24px;line-height:28px;text-align:justify;text-align-last:justify;transform-origin:0 22px;transform:scaleY(1.09)">тивно просты, технологичны и имеют высокую воспроизводимость характе-</div>
<div class="a" style="left:336px;top:169.6px;white-space:nowrap;font-family:'Liberation Serif',serif;font-size:24px;line-height:28px;letter-spacing:0.17px;transform-origin:0 22px;transform:scaleY(1.09)">ристик. Схема ВЦ на показана на рис. 2.48.</div>
<div class="a spane" style="left:1089px;width:93px">Стр. 78 из 289</div>
<div class="a spane" style="left:1184px;width:95px">20,99 x 29,7 см</div>
<!-- vscroll buttons & thumb -->
<div class="a sbtn" style="left:1264px;top:98px"></div>
<div class="a sbtn" style="left:1264px;top:960px"></div>
<div class="a sbtn" style="left:1264px;top:339px;height:7px"></div>
<svg class="a" style="left:1264px;top:98px" width="16" height="878" viewBox="1264 98 16 878"><path d="M1268 108h7l-3.5-4z M1268 965h7l-3.5 4z" fill="#000"/></svg>
<!-- title icon & buttons glyphs -->
<svg class="a" style="left:2px;top:1px" width="16" height="16" viewBox="0 0 16 16">
<defs><linearGradient id="pur" x1="0" y1="0" x2="1" y2="1"><stop offset="0" stop-color="#9a5ae8"/><stop offset="1" stop-color="#4a1ab0"/></linearGradient></defs>
<rect x="0" y="0" width="16" height="16" fill="url(#pur)"/>
<path d="M1 2l9 9M1 5l8 8M3 1l8 8" stroke="#d8d0f0" stroke-width="0.9"/>
<path d="M9 10l4-2l2 5l-4 2z" fill="#f4a018"/>
</svg>
<svg class="a" style="left:1228px;top:2px" width="50" height="14" viewBox="1228 2 50 14" shape-rendering="crispEdges">
<rect x="1232" y="11" width="6" height="2" fill="#000"/>
<rect x="1249.5" y="4.5" width="5" height="5" fill="none" stroke="#000" stroke-width="1"/><rect x="1249" y="5" width="6" height="1" fill="#000"/>
<rect x="1247.5" y="7.5" width="5" height="5" fill="#d4d0c8" stroke="#000"/><rect x="1247" y="8" width="6" height="1" fill="#000"/>
<path d="M1266.5 5.5l6 6M1272.5 5.5l-6 6" stroke="#000" stroke-width="1.5" shape-rendering="auto"/>
</svg>
<div class="a" style="left:0;top:995px;width:1280px;height:1px;background:#fff"></div>
<!-- start -->
<div class="a task" style="left:2px;width:51px"></div>
<div class="a" style="left:22px;top:1003px;font-weight:bold;font-size:12px;line-height:14px">Пуск</div>
<svg class="a" style="left:4px;top:1001px" width="16" height="16" viewBox="0 0 16 16">
<path d="M3 1.5q2.5-1 5 .3l-1.3 5.2q-2.5-1.3-5 -.3z" fill="#f06020"/>
<path d="M9 2q2.5 1.2 5 .2l-1.3 5.2q-2.5 1-5-.2z" fill="#60b030"/>
<path d="M1.6 8q2.5-1 5 .3l-1.3 5.2q-2.5-1.3-5-.3z" fill="#2a90e0"/>
<path d="M7.6 8.6q2.5 1.2 5 .2l-1.3 5.2q-2.5 1-5-.2z" fill="#f8c020"/>
</svg>
<!-- tasks -->
<div class="a task" style="left:58px;width:160px"><span>D:\ПОЛИТЕХ\2012\Прие...</span></div>
<div class="a task" style="left:221px;width:160px"><span>D:\АЭРОКОСМ\Дисципл...</span></div>
<div class="a task" style="left:384px;width:160px"><span>D:\АЭРОКОСМ\Дисципл...</span></div>
<div class="a task" style="left:547px;width:160px"><span style="letter-spacing:0.15px">УПриОС.doc [Режим ог...</span></div>
<div class="a task" style="left:710px;width:160px"><span>ЛЕКЦИЯ8_1.docx - Micr...</span></div>
<div class="a" style="left:873px;top:998px;width:160px;height:23px;background-color:#eeede9;background-image:repeating-conic-gradient(#d4d0c8 0 25%,#fff 0 50%);background-size:2px 2px;border-top:1px solid #404040;border-left:1px solid #404040;border-right:1px solid #fff;border-bottom:1px solid #fff;box-shadow:inset 1px 1px 0 #808080"></div>
<div class="a" style="left:898px;top:1004px;font-weight:bold;line-height:13px;letter-spacing:0.35px;white-space:nowrap">УПриОС-класс.djvu - ...</div>
<svg class="a" style="left:0;top:998px" width="900" height="24" viewBox="0 998 900 24">
<defs>
<linearGradient id="tf" x1="0" y1="0" x2="1" y2="0"><stop offset="0" stop-color="#f8e8a0"/><stop offset="0.5" stop-color="#e8c050"/><stop offset="1" stop-color="#f0d880"/></linearGradient>
<g id="fold16"><path d="M1 2h5l1 1v12h-6z" fill="#e0b848"/><path d="M2.5 3.5l10 1v11l-10-1z" fill="url(#tf)" stroke="#c8a040" stroke-width="0.6"/><circle cx="12.5" cy="11" r="1" fill="#40a0e0"/></g>
<g id="word16"><path d="M2.5 0.5h9l3 3v12h-12z" fill="#fff" stroke="#5078b8"/><path d="M4 5h9M4 7h9M4 9h9M4 11h9M4 13h9" stroke="#90a8d0" stroke-width="0.8"/><rect x="0.5" y="3" width="9" height="7" fill="#2a5ab8"/><text x="1.2" y="9.2" font-size="7" font-weight="bold" fill="#fff" font-family="Liberation Sans">W</text></g>
</defs>
<use href="#fold16" x="62" y="1001"/><use href="#fold16" x="225" y="1001"/><use href="#fold16" x="388" y="1001"/>
<use href="#word16" x="551" y="1001"/><use href="#word16" x="714" y="1001"/>
<g transform="translate(878 1002)"><rect width="16" height="16" fill="url(#pur)"/><path d="M1 2l9 9M1 5l8 8M3 1l8 8" stroke="#d8d0f0" stroke-width="0.9"/><path d="M9 10l4-2l2 5l-4 2z" fill="#f4a018"/></g>
</svg>
<!-- lang & tray -->
<div class="a" style="left:1122px;top:1002px;width:16px;height:16px;background:#0a246a;color:#fff;line-height:16px;font-size:11px;text-align:center;letter-spacing:-0.5px">EN</div>
<div class="a" style="left:1142px;top:998px;width:1px;height:24px;background:#808080"></div>
<div class="a" style="left:1143px;top:998px;width:1px;height:24px;background:#fff"></div>
<div class="a" style="left:1147px;top:998px;width:131px;height:24px;border-top:1px solid #808080;border-left:1px solid #808080;border-right:1px solid #fff;border-bottom:1px solid #fff"></div>
<div class="a" style="left:1241px;top:1004px;line-height:13px">22:01</div>
<svg class="a" style="left:1148px;top:999px" width="90" height="22" viewBox="1148 999 90 22">
<defs>
<radialGradient id="or" cx="0.4" cy="0.35" r="0.7"><stop offset="0" stop-color="#ffb040"/><stop offset="1" stop-color="#c03800"/></radialGradient>
<radialGradient id="gr" cx="0.4" cy="0.35" r="0.7"><stop offset="0" stop-color="#40f040"/><stop offset="1" stop-color="#007a10"/></radialGradient>
</defs>
<path d="M1156.5 1007.5l-3 2.5l3 2.5M1159.5 1007.5l-3 2.5l3 2.5" stroke="#000" stroke-width="1.4" fill="none"/>
<circle cx="1173" cy="1010" r="7.5" fill="url(#or)"/><path d="M1170 1013a3.5 3.5 0 1 1 5.5 -2.5v3" stroke="#fff" stroke-width="2" fill="none"/>
<circle cx="1191" cy="1010" r="7.5" fill="url(#gr)"/><circle cx="1191" cy="1010" r="4.5" fill="none" stroke="#004a08" stroke-width="1.2"/><circle cx="1191" cy="1010" r="1.8" fill="none" stroke="#004a08" stroke-width="1"/>
<path d="M1204 1003.5q3-1.5 5 .5q3-1 5.5 1.5q2.5 2.5 1 5.5q1.5 3.5-1 5.5q-3 2-5.5 .5q-3 1.5-5.5-1q-2.5-3-.5-5.5q-1.5-3.5 1-6.5z" fill="#fafafa" stroke="#80d020" stroke-width="1.3"/>
<g shape-rendering="crispEdges"><rect x="1220" y="1012" width="3" height="4" fill="#a8e0a0" stroke="#60a060" stroke-width="0.6"/><rect x="1224" y="1009" width="3" height="7" fill="#a8e0a0" stroke="#60a060" stroke-width="0.6"/><rect x="1228" y="1006" width="3" height="10" fill="#e8e8e8" stroke="#808080" stroke-width="0.6"/><rect x="1232" y="1003" width="3" height="13" fill="#e8e8e8" stroke="#808080" stroke-width="0.6"/></g>
</svg>
</body></html>
